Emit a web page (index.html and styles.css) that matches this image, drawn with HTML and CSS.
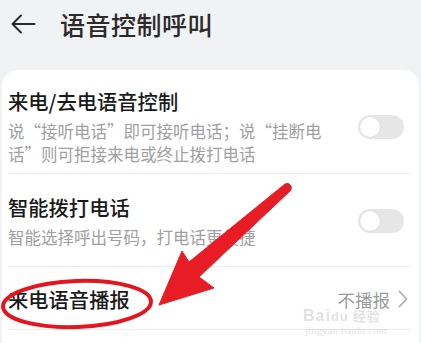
FILE: index.html
```html
<!DOCTYPE html>
<html lang="zh">
<head>
<meta charset="utf-8">
<link rel="stylesheet" href="styles.css">
</head>
<body>
<div class="page">
  <header class="topbar">
    <svg class="back" viewBox="0 0 26 22" width="26" height="22">
      <path d="M24.5 11H2.5M11 2.5L2.5 11L11 19.5" fill="none" stroke="#2a2a2a" stroke-width="2" stroke-linecap="round" stroke-linejoin="round"/>
    </svg>
    <h1 class="title">语音控制呼叫</h1>
  </header>
  <section class="card">
    <div class="row row-first">
      <div class="text">
        <div class="row-title">来电/去电语音控制</div>
        <div class="row-sub">说“接听电话”即可接听电话；说“挂断电话”则可拒接来电或终止拨打电话</div>
      </div>
      <div class="switch"><span class="knob"></span></div>
    </div>
    <div class="row row-second">
      <div class="text">
        <div class="row-title">智能拨打电话</div>
        <div class="row-sub">智能选择呼出号码，打电话更便捷</div>
      </div>
      <div class="switch"><span class="knob"></span></div>
    </div>
    <div class="row row-third">
      <div class="row-title">来电语音播报</div>
      <div class="value">不播报
        <svg class="chev" viewBox="0 0 10 18" width="10" height="18"><path d="M1.5 1.5L8.5 9L1.5 16.5" fill="none" stroke="#b0b0b0" stroke-width="1.8" stroke-linecap="round" stroke-linejoin="round"/></svg>
      </div>
    </div>
  </section>
  <div class="watermark">
    <div class="wm-logo">Bai<span class="wm-du">du</span><span class="wm-cn">经验</span></div>
    <div class="wm-url">jingyan.baidu.com</div>
  </div>
  <svg class="annot" viewBox="0 0 421 343" width="421" height="343">
    <ellipse cx="77" cy="304" rx="74" ry="23" transform="rotate(-2 77 304)" fill="none" stroke="#e3161d" stroke-width="4"/>
    <path d="M285 184 Q289 182 291 186 Q292 189 290 191 L199 277 L214 288 L159 305 L182 251 L189 262 Z" fill="#e81c24" stroke="#e81c24" stroke-width="1" stroke-linejoin="round"/>
  </svg>
</div>
</body>
</html>
```

FILE: styles.css
```css
html, body {
  margin: 0;
  padding: 0;
  background: #f1f2f4;
}
body {
  font-family: "Noto Sans CJK SC", "Noto Sans", sans-serif;
  color: #1b1b1b;
  width: 421px;
  height: 343px;
  overflow: hidden;
}
.page {
  position: relative;
  width: 421px;
  height: 343px;
  overflow: hidden;
}
.topbar {
  display: flex;
  align-items: center;
  height: 48px;
  padding-left: 10px;
  gap: 24px;
}
.back {
  display: block;
}
.title {
  margin: 0;
  font-size: 25px;
  font-weight: 500;
  color: #2a2a2a;
  letter-spacing: 0.5px;
}
.card {
  margin: 22px 2px 0 2px;
  background: #fff;
  border-radius: 16px 16px 0 0;
  padding: 0 8px 0 6px;
  height: 273px;
  box-sizing: border-box;
}
.row {
  display: flex;
  align-items: center;
  justify-content: space-between;
  border-bottom: 1px solid #ececec;
}
.row-first {
  padding: 17px 0 7px 0;
}
.row-second {
  padding: 19px 0 17px 0;
}
.row-third {
  padding: 18px 0 16px 0;
}
.text {
  flex: 1;
}
.row-title {
  font-size: 20.3px;
  line-height: 28px;
  font-weight: 500;
  color: #1a1a1a;
}
.row-sub {
  margin-top: 5px;
  font-size: 16.5px;
  line-height: 23px;
  color: #a0a0a0;
  width: 318px;
}
.switch {
  width: 46px;
  height: 24px;
  border-radius: 12px;
  background: #e6e6e6;
  margin-right: 7px;
  display: flex;
  align-items: center;
  padding-left: 2px;
  box-sizing: border-box;
}
.knob {
  width: 20px;
  height: 20px;
  border-radius: 50%;
  background: #fff;
  box-shadow: 0 0 1px rgba(0,0,0,0.15);
}
.value {
  display: flex;
  align-items: center;
  gap: 8px;
  font-size: 17.5px;
  color: #9a9a9a;
  margin-right: 3px;
}
.chev {
  display: block;
}
.watermark {
  position: absolute;
  left: 303px;
  top: 309px;
  color: rgba(170,170,170,0.35);
  font-family: "Liberation Sans", sans-serif;
  pointer-events: none;
}
.wm-logo {
  font-size: 16px;
  font-weight: bold;
  line-height: 14px;
  letter-spacing: 1px;
}
.wm-du {
  font-size: 13px;
}
.wm-cn {
  font-family: "Noto Sans CJK SC", sans-serif;
  font-size: 13px;
  margin-left: 4px;
}
.wm-url {
  font-size: 11px;
  line-height: 13px;
  margin-left: 2px;
  font-family: "Liberation Serif", serif;
}
.annot {
  position: absolute;
  left: 0;
  top: 0;
  pointer-events: none;
}
```
